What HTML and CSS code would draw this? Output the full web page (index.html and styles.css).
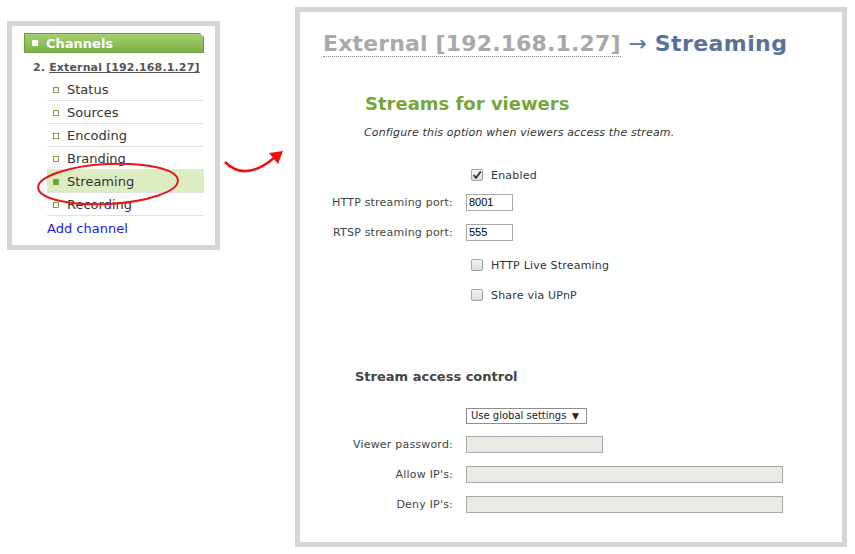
FILE: index.html
```html
<!DOCTYPE html>
<html lang="en">
<head>
  <meta charset="UTF-8" />
  <title>Streaming - External</title>
  <link rel="stylesheet" href="styles.css">
</head>
<body>
  <div class="page">

    <!-- Channel menu -->
    <div class="nav-frame">
      <div class="nav-head"><span class="sq"></span>Channels</div>
      <div class="channel-name">2. <u>External [192.168.1.27]</u></div>
      <ul class="menu">
        <li><span class="dot"></span>Status</li>
        <li><span class="dot"></span>Sources</li>
        <li><span class="dot"></span>Encoding</li>
        <li><span class="dot"></span>Branding</li>
        <li class="active"><span class="dot"></span>Streaming</li>
        <li><span class="dot"></span>Recording</li>
        <li class="add"><a href="#">Add channel</a></li>
      </ul>
      <svg class="circle" width="146" height="48" viewBox="0 0 146 48">
        <ellipse cx="72" cy="24" rx="70" ry="20" transform="rotate(-3 72 24)" fill="none" stroke="#e8161b" stroke-width="2"/>
      </svg>
    </div>

    <!-- Pointer -->
    <div class="pointer">
      <svg width="75" height="200" viewBox="0 0 75 200">
        <path d="M5,155 Q25,175 54,151" fill="none" stroke="#ee1111" stroke-width="2.5"/>
        <polygon points="63,144 49,146 58,157" fill="#ee1111"/>
      </svg>
    </div>

    <!-- Streaming settings -->
    <div class="main-frame">
      <h1 class="title"><span class="crumb">External [192.168.1.27]</span> <span class="sep">&rarr;</span> <span class="page-name">Streaming</span></h1>

      <h2 class="section">Streams for viewers</h2>
      <p class="hint">Configure this option when viewers access the stream.</p>

      <div class="form">
        <div class="row tight">
          <span class="label"></span>
          <span class="check on"><svg width="10" height="10" viewBox="0 0 10 10"><path d="M1.5,5 L4,7.8 L8.8,1.5" fill="none" stroke="#333" stroke-width="1.8"/></svg></span>
          <span class="check-text">Enabled</span>
        </div>
        <div class="row">
          <span class="label">HTTP streaming port:</span>
          <span class="field port">8001</span>
        </div>
        <div class="row">
          <span class="label">RTSP streaming port:</span>
          <span class="field port">555</span>
        </div>
        <div class="row gap">
          <span class="label"></span>
          <span class="check"></span>
          <span class="check-text">HTTP Live Streaming</span>
        </div>
        <div class="row">
          <span class="label"></span>
          <span class="check"></span>
          <span class="check-text">Share via UPnP</span>
        </div>
      </div>

      <h3 class="subsection">Stream access control</h3>

      <div class="form access">
        <div class="row short">
          <span class="label"></span>
          <span class="select">Use global settings <span class="caret">&#9660;</span></span>
        </div>
        <div class="row">
          <span class="label">Viewer password:</span>
          <span class="field off pass"></span>
        </div>
        <div class="row">
          <span class="label">Allow IP's:</span>
          <span class="field off wide"></span>
        </div>
        <div class="row">
          <span class="label">Deny IP's:</span>
          <span class="field off wide"></span>
        </div>
      </div>
    </div>

  </div>
</body>
</html>
```

FILE: styles.css
```css
body {
  margin: 0;
  background: #fff;
  font-family: "DejaVu Sans", Verdana, sans-serif;
  color: #333;
}

.page {
  display: flex;
  align-items: flex-start;
  padding: 7px 0 0 7px;
}

/* left menu */
.nav-frame {
  position: relative;
  box-sizing: border-box;
  width: 213px;
  margin-top: 14px;
  border: 5px solid #d6d6d6;
  padding: 7px 11px 6px 12px;
}

.nav-head {
  display: flex;
  align-items: center;
  height: 20px;
  box-sizing: border-box;
  border: 1px solid #6f9e3c;
  background: linear-gradient(#a2d06f, #7db246);
  clip-path: polygon(0 0, calc(100% - 4px) 0, 100% 4px, 100% 100%, 0 100%);
  color: #fff;
  font-weight: bold;
  font-size: 13px;
}

.nav-head .sq {
  width: 6px;
  height: 6px;
  background: #fff;
  margin: 0 8px 0 7px;
}

.channel-name {
  height: 21px;
  line-height: 22px;
  margin-top: 4px;
  padding-left: 9px;
  font-size: 11px;
  letter-spacing: 0.15px;
  font-weight: bold;
  white-space: nowrap;
  color: #555;
}

.menu {
  list-style: none;
  margin: 0 0 0 23px;
  padding: 0;
}

.menu li {
  display: flex;
  align-items: center;
  box-sizing: border-box;
  height: 23px;
  padding: 1px 0 0 6px;
  border-bottom: 1px solid #e2e2e2;
  font-size: 13px;
  color: #333;
}

.menu li .dot {
  width: 4px;
  height: 4px;
  border: 1px solid #79a63d;
  margin-right: 8px;
}

.menu li.active {
  background: #dcedc1;
}

.menu li.active .dot {
  background: #6e9e3a;
}

.menu li.add {
  border-bottom: none;
  padding-left: 0;
}

.menu li.add a {
  color: #1a1ae6;
  text-decoration: none;
}

.circle {
  position: absolute;
  left: 24px;
  top: 134px;
}

.pointer {
  width: 75px;
  flex: none;
}

.pointer svg {
  display: block;
}

/* main panel */
.main-frame {
  box-sizing: border-box;
  width: 552px;
  height: 540px;
  border: 5px solid #d6d6d6;
}

.title {
  margin: 0;
  padding: 18px 0 0 23px;
  font-size: 22px;
  line-height: 28px;
  font-weight: bold;
  letter-spacing: 0.15px;
  white-space: nowrap;
}

.title .crumb {
  color: #a9a9a9;
  border-bottom: 1px dotted #8a8a8a;
}

.title .sep {
  color: #5a7199;
  font-weight: normal;
}

.title .page-name {
  color: #5a7199;
  letter-spacing: 0.4px;
}

.section {
  margin: 34px 0 0;
  padding-left: 65px;
  font-size: 18px;
  line-height: 24px;
  color: #78a53a;
}

.hint {
  margin: 10px 0 0;
  padding-left: 64px;
  font-size: 11px;
  letter-spacing: 0.15px;
  line-height: 14px;
  font-style: italic;
  color: #333;
}

.form {
  margin-top: 20px;
}

.row {
  display: flex;
  align-items: center;
  height: 30px;
}

.row.tight {
  margin-bottom: -3px;
}

.row.gap {
  margin-top: 3px;
}

.row.short {
  height: 27px;
}

.label {
  flex: none;
  width: 153px;
  margin-right: 13px;
  text-align: right;
  font-size: 11px;
  letter-spacing: 0.2px;
  color: #444;
}

.check {
  display: flex;
  align-items: center;
  justify-content: center;
  box-sizing: border-box;
  width: 12px;
  height: 12px;
  margin-left: 5px;
  border: 1px solid #a4a4a4;
  border-radius: 2px;
  background: linear-gradient(#f4f4f4, #dddddd);
}

.check-text {
  margin-left: 8px;
  font-size: 11px;
  letter-spacing: 0.2px;
  color: #333;
}

.field {
  box-sizing: border-box;
  height: 17px;
  line-height: 15px;
  padding: 0 2px;
  border: 1px solid #a9a9a9;
  font-family: "Liberation Sans", Arial, sans-serif;
  font-size: 11px;
  color: #000;
}

.field.port {
  width: 47px;
}

.field.off {
  background: #ebe9e3;
}

.field.pass {
  width: 137px;
}

.field.wide {
  width: 317px;
}

.subsection {
  margin: 58px 0 0;
  padding-left: 55px;
  font-size: 13px;
  line-height: 18px;
  color: #444;
}

.access {
  margin-top: 16px;
}

.select {
  display: flex;
  align-items: center;
  box-sizing: border-box;
  width: 121px;
  height: 16px;
  padding: 0 7px 0 4px;
  border: 1px solid #8c8c8c;
  font-size: 10px;
  white-space: nowrap;
  color: #222;
}

.select .caret {
  margin-left: auto;
  font-size: 9px;
}
```
